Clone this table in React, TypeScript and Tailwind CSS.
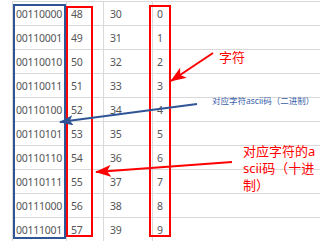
import React from "react";

const rows = [
  ["00110000", "48", "30", "0"],
  ["00110001", "49", "31", "1"],
  ["00110010", "50", "32", "2"],
  ["00110011", "51", "33", "3"],
  ["00110100", "52", "34", "4"],
  ["00110101", "53", "35", "5"],
  ["00110110", "54", "36", "6"],
  ["00110111", "55", "37", "7"],
  ["00111000", "56", "38", "8"],
  ["00111001", "57", "39", "9"],
];

export default function App() {
  return (
    <div
      className="relative w-[320px] h-[241px] overflow-hidden bg-white"
      style={{ fontFamily: '"Noto Sans", "Noto Sans CJK SC", sans-serif' }}
    >
      <div className="pt-[1px] pl-[12px]">
        <div className="border-t border-[#d9d9d9]">
          {rows.map((r) => (
            <div
              key={r[0]}
              className="flex h-[24px] border-b border-[#d9d9d9] text-[10.5px] tracking-[-0.25px] text-[#555555]"
            >
              <div className="w-[54px] flex items-center pl-[3px] pt-[2px] border-l border-[#d9d9d9]">
                {r[0]}
              </div>
              <div className="w-[37px] flex items-center pl-[4px] pt-[2px] border-l border-[#d9d9d9]">
                {r[1]}
              </div>
              <div className="w-[49px] flex items-center pl-[6px] pt-[2px] border-l border-[#d9d9d9]">
                {r[2]}
              </div>
              <div className="flex-1 flex items-center pl-[4px] pt-[2px] border-l border-[#d9d9d9]">
                {r[3]}
              </div>
            </div>
          ))}
        </div>
      </div>

      {/* highlight boxes */}
      <div className="absolute left-[13px] top-[4px] w-[53px] h-[235px] border-2 border-[#2f5597]" />
      <div className="absolute left-[66px] top-[6px] w-[27px] h-[231px] border-2 border-[#ff0000]" />
      <div className="absolute left-[149px] top-[5px] w-[22px] h-[232px] border-2 border-[#ff0000]" />

      {/* arrows */}
      <svg className="absolute left-0 top-0" width="320" height="241" viewBox="0 0 320 241">
        <defs>
          <marker
            id="redHead"
            markerWidth="16"
            markerHeight="12"
            refX="15"
            refY="6"
            orient="auto"
            markerUnits="userSpaceOnUse"
          >
            <path d="M0,0 L16,6 L0,12 L4,6 Z" fill="#ff0000" />
          </marker>
          <marker
            id="blueHead"
            markerWidth="14"
            markerHeight="10"
            refX="13"
            refY="5"
            orient="auto"
            markerUnits="userSpaceOnUse"
          >
            <path d="M0,0 L14,5 L0,10 L3,5 Z" fill="#2f5597" />
          </marker>
        </defs>
        <line x1="213" y1="53" x2="171" y2="81" stroke="#ff0000" strokeWidth="2" markerEnd="url(#redHead)" />
        <line x1="197" y1="104" x2="60" y2="122" stroke="#2f5597" strokeWidth="2" markerEnd="url(#blueHead)" />
        <line x1="232" y1="162" x2="96" y2="172" stroke="#ff0000" strokeWidth="2" markerEnd="url(#redHead)" />
      </svg>

      {/* labels */}
      <div className="absolute left-[219px] top-[48px] text-[13px] leading-[18px] text-[#ff0000]">字符</div>
      <div className="absolute left-[212px] top-[95px] text-[8.5px] leading-[12px] text-[#3a5da8] whitespace-nowrap">
        对应字符ascii码（二进制）
      </div>
      <div className="absolute left-[243px] top-[143px] text-[13px] leading-[17px] text-[#ff0000] whitespace-nowrap">
        <div>对应字符的a</div>
        <div>scii码（十进</div>
        <div>制）</div>
      </div>
    </div>
  );
}
